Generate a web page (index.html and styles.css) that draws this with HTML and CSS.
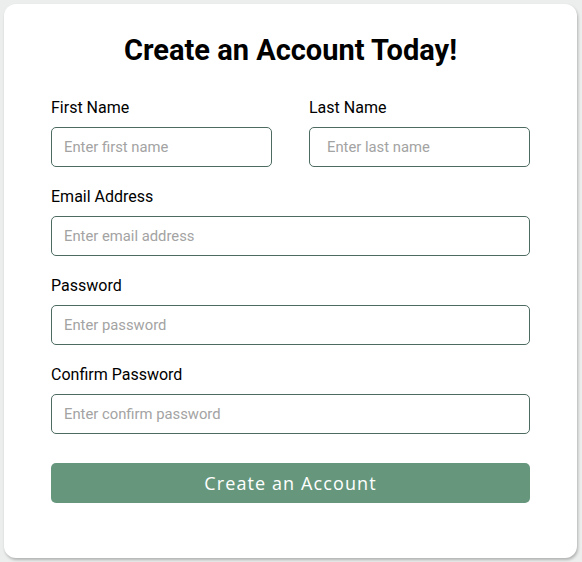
FILE: index.html
```html
<!DOCTYPE html>
<html lang="en">
<head>
<meta charset="utf-8">
<title>Create an Account</title>
<link rel="stylesheet" href="styles.css">
</head>
<body>
<main class="card">
  <h1 class="title">Create an Account Today!</h1>
  <form class="form">
    <div class="row two">
      <div class="field">
        <label class="label" for="fn">First Name</label>
        <input class="input" id="fn" type="text" placeholder="Enter first name">
      </div>
      <div class="field">
        <label class="label" for="ln">Last Name</label>
        <input class="input input-wide" id="ln" type="text" placeholder="Enter last name">
      </div>
    </div>
    <div class="field">
      <label class="label" for="em">Email Address</label>
      <input class="input" id="em" type="email" placeholder="Enter email address">
    </div>
    <div class="field">
      <label class="label" for="pw">Password</label>
      <input class="input" id="pw" type="password" placeholder="Enter password">
    </div>
    <div class="field">
      <label class="label" for="cpw">Confirm Password</label>
      <input class="input" id="cpw" type="password" placeholder="Enter confirm password">
    </div>
    <button class="btn" type="button">Create an Account</button>
  </form>
</main>
</body>
</html>
```
FILE: styles.css
```css
* { box-sizing: border-box; }
html, body { margin: 0; padding: 0; }
body {
  background: #eceeed;
  font-family: Roboto, "Liberation Sans", sans-serif;
  padding: 4px 5px 4px 4px;
}
.card {
  width: 573px;
  height: 554px;
  background: #ffffff;
  border-radius: 12px;
  box-shadow: 1px 2px 3px rgba(0,0,0,0.25);
  padding: 29px 47px 0 47px;
}
.title {
  margin: 0;
  text-align: center;
  font-size: 29px;
  line-height: 34px;
  font-weight: 700;
  color: #000;
}
.form {
  margin-top: 31px;
  display: flex;
  flex-direction: column;
  gap: 20px;
}
.row.two {
  display: grid;
  grid-template-columns: 1fr 1fr;
  gap: 37px;
}
.field {
  display: flex;
  flex-direction: column;
  gap: 10px;
}
.label {
  font-size: 16px;
  line-height: 19px;
  color: #000;
}
.input {
  height: 40px;
  width: 100%;
  border: 1px solid #4d6b60;
  border-radius: 5px;
  padding: 0 12px;
  font-family: Roboto, "Liberation Sans", sans-serif;
  font-size: 14.8px;
  color: #000;
  background: #fff;
  outline: none;
}
.input-wide { padding-left: 17px; }
.input::placeholder { color: #a3a3a3; }
.btn {
  margin-top: 9px;
  height: 40px;
  width: 100%;
  border: none;
  border-radius: 5px;
  background: #66977d;
  color: #fff;
  font-family: "Open Sans", "DejaVu Sans", sans-serif;
  font-size: 18px;
  letter-spacing: 1.1px;
  cursor: pointer;
}
```
